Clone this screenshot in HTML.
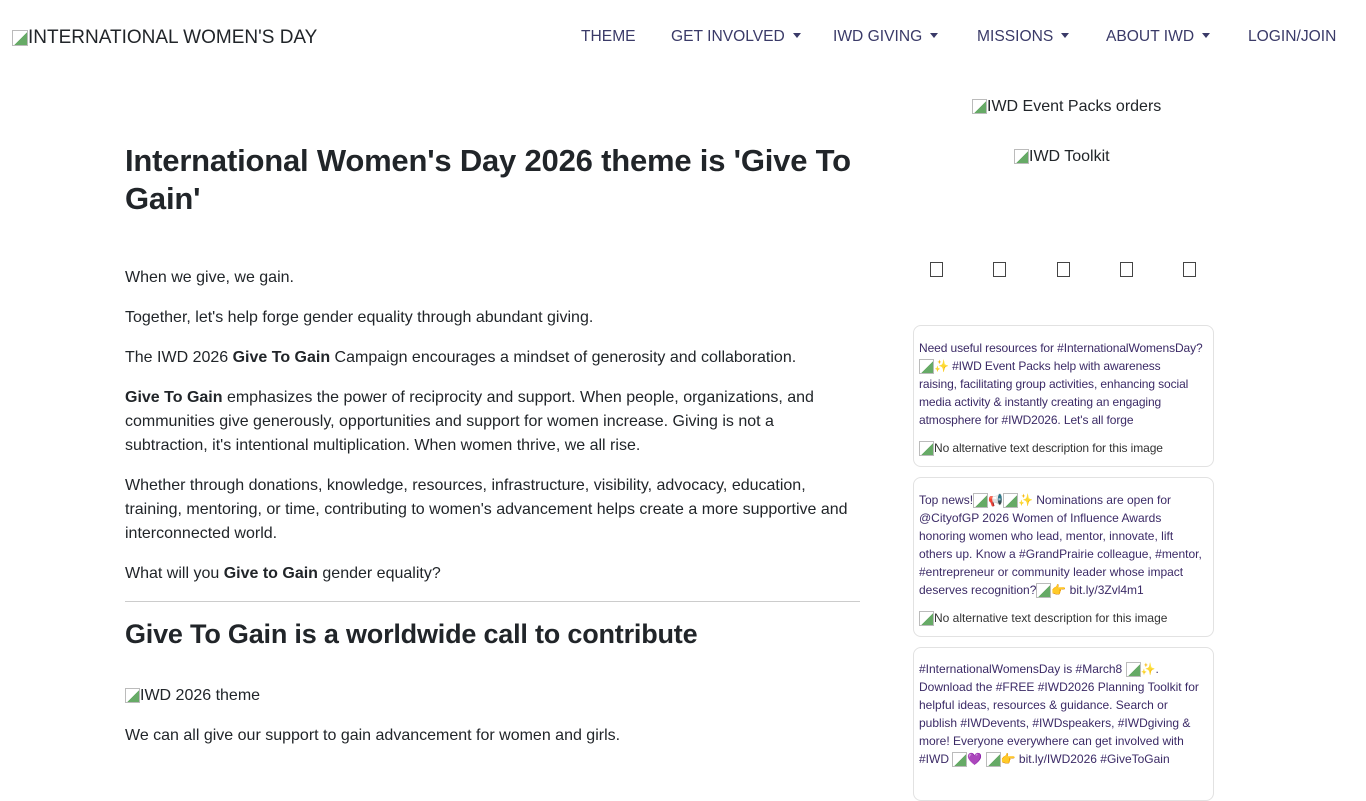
<!DOCTYPE html>
<html><head><meta charset="utf-8"><style>
body{margin:0;background:#fff;font-family:"Liberation Sans",sans-serif;color:#212529;width:1366px;height:768px;overflow:hidden;position:relative}
.a{position:absolute}
.logo{left:12px;top:27px;font-size:19px;color:#212529}
.nav{top:28px;font-size:15.6px;color:#3a3a68}
.nav span.c{display:inline-block;border-top:5px solid #3a3a68;border-left:4px solid transparent;border-right:4px solid transparent;vertical-align:middle;margin-left:8px;margin-top:-3px}
h1{position:absolute;left:125px;top:142px;width:760px;margin:0;font-size:31px;font-weight:600;line-height:38px;letter-spacing:-0.2px}
h2{position:absolute;left:125px;top:619px;margin:0;font-size:27px;font-weight:600;letter-spacing:-0.2px}
.p{position:absolute;left:125px;width:735px;font-size:16px;line-height:24px;margin:0}
.hr{position:absolute;left:125px;top:601px;width:735px;border-top:1px solid #ccc}
.side{font-size:16px;color:#212529}
.box{position:absolute;width:11px;height:13px;border:1px solid #444;top:262px}
.card{position:absolute;left:913px;width:290px;border:1px solid #e2e2e2;border-radius:8px;padding:13px 4px 0 5px;font-size:12px;line-height:18px;color:#3b2a66;box-sizing:content-box}
.card p{margin:0 0 10px}
.card p.n{margin:0;color:#333}
.ic{display:inline-block;width:13px;height:13px;border:1px solid #bbb;vertical-align:middle;background:linear-gradient(135deg,#fff 55%,#6a6 55%)}
</style></head><body>
<div class="a logo"><span class="ic" style="width:14px;height:14px"></span>INTERNATIONAL WOMEN'S DAY</div>
<div class="a nav" style="left:581px">THEME</div>
<div class="a nav" style="left:671px">GET INVOLVED<span class="c"></span></div>
<div class="a nav" style="left:833px">IWD GIVING<span class="c"></span></div>
<div class="a nav" style="left:977px">MISSIONS<span class="c"></span></div>
<div class="a nav" style="left:1106px">ABOUT IWD<span class="c"></span></div>
<div class="a nav" style="left:1248px">LOGIN/JOIN</div>

<h1>International Women's Day 2026 theme is 'Give To Gain'</h1>
<p class="p" style="top:266px">When we give, we gain.</p>
<p class="p" style="top:306px">Together, let's help forge gender equality through abundant giving.</p>
<p class="p" style="top:346px">The IWD 2026 <b>Give To Gain</b> Campaign encourages a mindset of generosity and collaboration.</p>
<p class="p" style="top:386px"><b>Give To Gain</b> emphasizes the power of reciprocity and support. When people, organizations, and communities give generously, opportunities and support for women increase. Giving is not a subtraction, it's intentional multiplication. When women thrive, we all rise.</p>
<p class="p" style="top:474px">Whether through donations, knowledge, resources, infrastructure, visibility, advocacy, education, training, mentoring, or time, contributing to women's advancement helps create a more supportive and interconnected world.</p>
<p class="p" style="top:562px">What will you <b>Give to Gain</b> gender equality?</p>
<div class="hr"></div>
<h2>Give To Gain is a worldwide call to contribute</h2>
<p class="p" style="top:684px"><span class="ic"></span>IWD 2026 theme</p>
<p class="p" style="top:724px">We can all give our support to gain advancement for women and girls.</p>

<div class="a side" style="left:972px;top:98px"><span class="ic"></span>IWD Event Packs orders</div>
<div class="a side" style="left:1014px;top:148px"><span class="ic"></span>IWD Toolkit</div>
<div class="box" style="left:930px"></div><div class="box" style="left:993px"></div><div class="box" style="left:1057px"></div><div class="box" style="left:1120px"></div><div class="box" style="left:1183px"></div>

<div class="card" style="top:325px;height:127px;letter-spacing:-0.1px">
<p>Need useful resources for #InternationalWomensDay?<br><span class="ic"></span>✨ #IWD Event Packs help with awareness<br>raising, facilitating group activities, enhancing social<br>media activity &amp; instantly creating an engaging<br>atmosphere for #IWD2026. Let's all forge</p>
<p class="n"><span class="ic"></span>No alternative text description for this image</p></div>
<div class="card" style="top:477px;height:145px;padding-top:13px">
<p>Top news!<span class="ic"></span>📢<span class="ic"></span>✨ Nominations are open for @CityofGP 2026 Women of Influence Awards honoring women who lead, mentor, innovate, lift others up. Know a #GrandPrairie colleague, #mentor, #entrepreneur or community leader whose impact deserves recognition?<span class="ic"></span>👉 bit.ly/3Zvl4m1</p>
<p class="n"><span class="ic"></span>No alternative text description for this image</p></div>
<div class="card" style="top:647px;height:140px;padding-top:12px">
<p>#InternationalWomensDay is #March8 <span class="ic"></span>✨. Download the #FREE #IWD2026 Planning Toolkit for helpful ideas, resources &amp; guidance. Search or publish #IWDevents, #IWDspeakers, #IWDgiving &amp; more! Everyone everywhere can get involved with #IWD <span class="ic"></span>💜 <span class="ic"></span>👉 bit.ly/IWD2026 #GiveToGain</p></div>
</body></html>
